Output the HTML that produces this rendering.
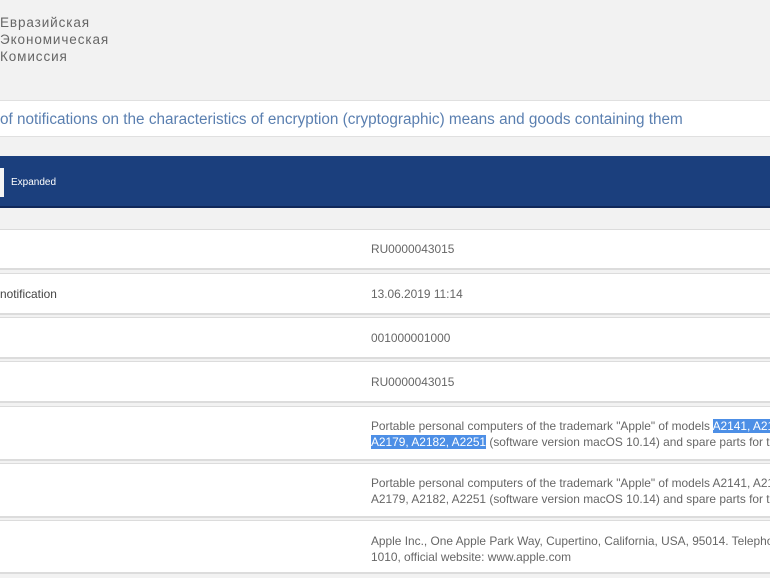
<!DOCTYPE html>
<html><head><meta charset="utf-8"><style>
body{margin:0;width:770px;height:578px;background:#f2f2f2;font-family:"Liberation Sans",sans-serif;overflow:hidden;position:relative}
.a{position:absolute}
.logo{left:0;top:14px;font-size:13.5px;line-height:17px;color:#666;letter-spacing:.9px}
.title{left:0;top:100px;width:770px;height:37px;background:#fff;border-top:1px solid #e0e0e0;border-bottom:1px solid #e0e0e0;box-sizing:border-box;color:#5a7fb0;font-size:15.3px;line-height:38px;white-space:nowrap}
.band{left:0;top:156px;width:770px;height:52px;background:#1b3f7d;border-bottom:2px solid #10285a;box-sizing:border-box}
.btn{left:0;top:168px;width:4px;height:29px;background:#f4f4f4}
.exp{left:11px;top:177px;color:#fff;font-size:10px}
.row{left:0;width:770px;background:#fff;border-top:1px solid #dcdcdc;border-bottom:2px solid #dcdcdc;box-sizing:border-box;font-size:11.9px;color:#666}
.v{position:absolute;left:371px;line-height:16px;white-space:nowrap}
.l{position:absolute;left:0;line-height:16px;color:#444}
.h{background:#4d8fe6;color:#fff}
</style></head><body>
<div class="a logo">Евразийская<br>Экономическая<br>Комиссия</div>
<div class="a title">of notifications on the characteristics of encryption (cryptographic) means and goods containing them</div>
<div class="a band"></div>
<div class="a btn"></div>
<div class="a exp">Expanded</div>
<div class="a row" style="top:229px;height:41px"><div class="v" style="top:11px">RU0000043015</div></div>
<div class="a row" style="top:273px;height:42px"><div class="l" style="top:12px">notification</div><div class="v" style="top:12px">13.06.2019 11:14</div></div>
<div class="a row" style="top:317px;height:42px"><div class="v" style="top:12px">001000001000</div></div>
<div class="a row" style="top:361px;height:42px"><div class="v" style="top:12px">RU0000043015</div></div>
<div class="a row" style="top:406px;height:55px"><div class="v" style="top:11px">Portable personal computers of the trademark "Apple" of models <span class="h">A2141, A2159,</span><br><span class="h">A2179, A2182, A2251</span> (software version macOS 10.14) and spare parts for them</div></div>
<div class="a row" style="top:463px;height:55px"><div class="v" style="top:11px">Portable personal computers of the trademark "Apple" of models A2141, A2159,<br>A2179, A2182, A2251 (software version macOS 10.14) and spare parts for them</div></div>
<div class="a row" style="top:520px;height:54px"><div class="v" style="top:12px">Apple Inc., One Apple Park Way, Cupertino, California, USA, 95014. Telephone<br>1010, official website: www.apple.com</div></div>
</body></html>
